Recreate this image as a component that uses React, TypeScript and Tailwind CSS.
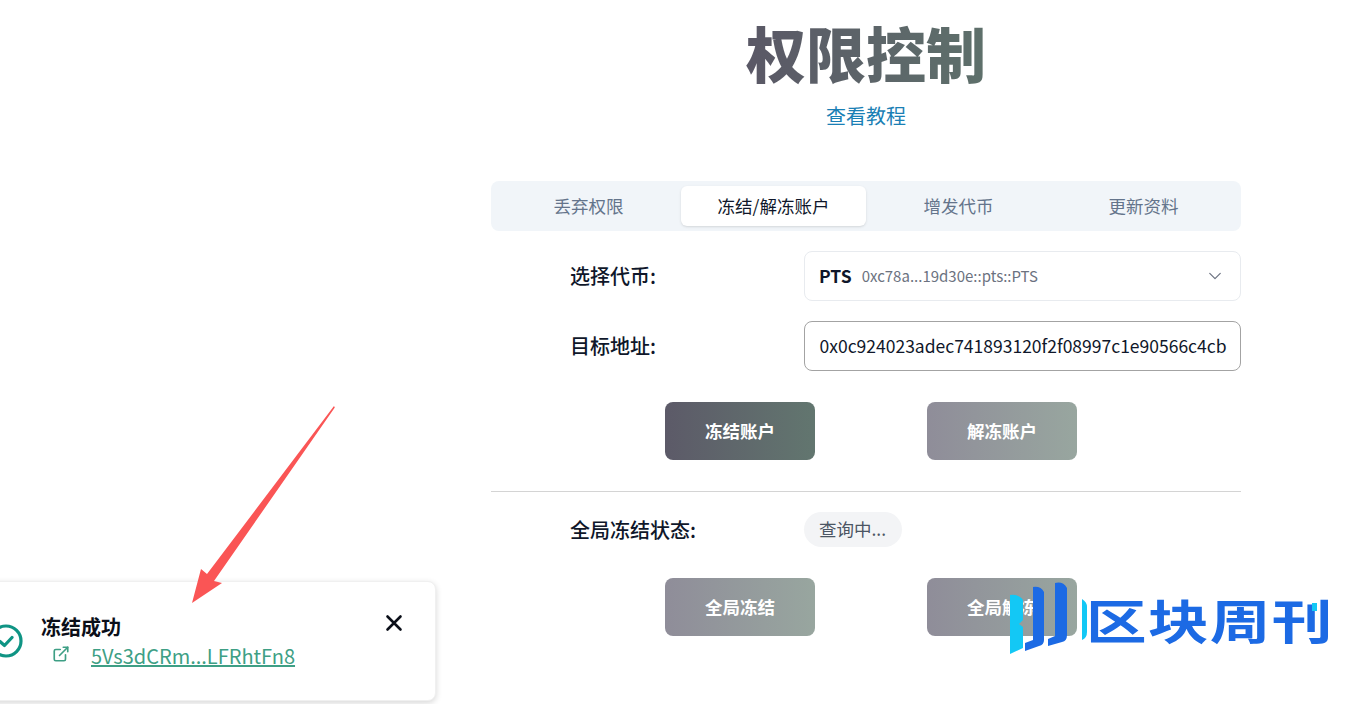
export default function App() {
  const cjk = "font-['Noto_Sans_CJK_SC','Noto_Sans',sans-serif]";
  return (
    <div className={`relative h-[704px] w-[1361px] overflow-hidden bg-white text-[#0f172a] ${cjk}`}>
      <div className="flex">
        <div className="w-[371px] shrink-0" />
        <main className="w-[990px] flex flex-col items-center">
          <h1 className="mt-[9px] h-[86px] text-[60px] leading-[86px] font-black bg-gradient-to-r from-[#5a5866] to-[#5e706b] bg-clip-text text-transparent">
            权限控制
          </h1>
          <a className="mt-[8px] h-[26px] text-[20px] leading-[26px] text-[#1a7fb5]">查看教程</a>
          <div className="mt-[52px] w-[750px]">
            <div className="grid h-[50px] grid-cols-4 rounded-[8px] bg-[#f1f5f9] p-[5px] text-[17.5px] text-[#64748b]">
              <div className="flex items-center justify-center">丢弃权限</div>
              <div className="flex items-center justify-center rounded-[6px] bg-white text-[#0f172a] shadow-sm">冻结/解冻账户</div>
              <div className="flex items-center justify-center">增发代币</div>
              <div className="flex items-center justify-center">更新资料</div>
            </div>

            <div className="mt-[20px] flex h-[50px] items-center pl-[79px]">
              <label className="w-[234px] text-[20px] font-medium">选择代币:</label>
              <div className="flex h-[50px] w-[437px] items-center rounded-[8px] border border-[#e8ebef] pl-[14px] pr-[16px]">
                <span className="text-[17.5px] font-bold">PTS</span>
                <span className="ml-[10px] text-[15px] text-[#6b7280]">0xc78a...19d30e::pts::PTS</span>
                <svg className="ml-auto h-[18px] w-[18px] text-[#6b7280]" viewBox="0 0 24 24" fill="none" stroke="currentColor" strokeWidth="1.6" strokeLinecap="round" strokeLinejoin="round">
                  <path d="m5 8.5 7 7 7-7" />
                </svg>
              </div>
            </div>

            <div className="mt-[20px] flex h-[50px] items-center pl-[79px]">
              <label className="w-[234px] text-[20px] font-medium">目标地址:</label>
              <div className="flex h-[50px] w-[437px] items-center overflow-hidden whitespace-nowrap rounded-[8px] border border-[#a3a3a3] pl-[14.5px] text-[17.5px]">
                0x0c924023adec741893120f2f08997c1e90566c4cb
              </div>
            </div>

            <div className="mt-[31px] flex gap-[112px] pl-[174px]">
              <button className="h-[58px] w-[150px] rounded-[8px] bg-gradient-to-r from-[#5c5a68] to-[#62766f] text-[17.5px] font-bold text-white">冻结账户</button>
              <button className="h-[58px] w-[150px] rounded-[8px] bg-gradient-to-r from-[#8f8d99] to-[#98a69f] text-[17.5px] font-bold text-white">解冻账户</button>
            </div>

            <hr className="mt-[31px] border-[#d4d4d4]" />

            <div className="mt-[20px] flex h-[35px] items-center pl-[79px]">
              <label className="w-[234px] text-[20px] font-medium">全局冻结状态:</label>
              <span className="flex h-[35px] items-center rounded-full bg-[#f3f4f6] pl-[15px] pr-[16px] text-[17.5px] text-[#4b5563]">查询中...</span>
            </div>

            <div className="mt-[31px] flex gap-[112px] pl-[174px]">
              <button className="h-[58px] w-[150px] rounded-[8px] bg-gradient-to-r from-[#8f8d99] to-[#98a69f] text-[17.5px] font-bold text-white">全局冻结</button>
              <button className="h-[58px] w-[150px] rounded-[8px] bg-gradient-to-r from-[#8f8d99] to-[#98a69f] text-[17.5px] font-bold text-white">全局解冻</button>
            </div>
          </div>
        </main>
      </div>

      {/* toast */}
      <div className="absolute left-[-30px] top-[581px] h-[120px] w-[466px] rounded-[8px] border border-[#f0f0f0] bg-white shadow-[0_2px_6px_rgba(0,0,0,0.16)]">
        <svg className="absolute left-[18px] top-[42px] h-[34px] w-[34px] text-[#0f9484]" viewBox="0 0 34 34" fill="none" stroke="currentColor" strokeWidth="3.2" strokeLinecap="round" strokeLinejoin="round">
          <circle cx="17" cy="17" r="15" />
          <path d="m11 17.5 4.5 4 7.5-8" />
        </svg>
        <div className="absolute left-[70px] top-[31px] text-[20px] leading-[28px] font-bold text-[#0b0f19]">冻结成功</div>
        <svg className="absolute left-[81px] top-[63px] h-[18px] w-[18px] text-[#3e9f85]" viewBox="0 0 24 24" fill="none" stroke="currentColor" strokeWidth="2.2" strokeLinecap="round" strokeLinejoin="round">
          <path d="M15 3h6v6" />
          <path d="M10 14 21 3" />
          <path d="M18 13v6a2 2 0 0 1-2 2H5a2 2 0 0 1-2-2V8a2 2 0 0 1 2-2h6" />
        </svg>
        <a className="absolute left-[120px] top-[60px] text-[20px] leading-[28px] text-[#3e9f85] underline">5Vs3dCRm...LFRhtFn8</a>
        <svg className="absolute left-[413px] top-[31px] h-[20px] w-[20px] text-[#0b0f19]" viewBox="0 0 20 20" fill="none" stroke="currentColor" strokeWidth="2.6" strokeLinecap="round">
          <path d="m3.5 3.5 13 13M16.5 3.5l-13 13" />
        </svg>
      </div>

      {/* annotation arrow */}
      <svg className="absolute left-[180px] top-[400px] h-[210px] w-[170px]" viewBox="0 0 170 210">
        <polygon points="154,6 154.8,7.5 34,181 42,183 12,203 21,169 27,174" fill="#fa5555" />
      </svg>

      {/* watermark logo */}
      <svg className="absolute left-[1005px] top-[580px] h-[80px] w-[90px]" viewBox="0 0 90 80">
        <path d="M5 15 Q14 14 18 20 V40 L14 44 L18 47 V68 L5 74 Z" fill="#13c8f5" />
        <path d="M28 7 Q36 6 39 12 V60 Q39 65 34 66 L20 71 V63 L28 60 Z" fill="#1c6ae4" />
        <path d="M50 3 Q58 1 62 8 V55 Q62 61 57 62 L43 66 V59 L50 56 Z" fill="#1c6ae4" />
        <path d="M77 19 Q82 22 82 27 V52 Q82 58 77 60 Z" fill="#13c8f5" />
      </svg>
      <div className="absolute left-[1086px] top-[587px] origin-left scale-x-[1.29] whitespace-nowrap text-[47px] leading-[64px] font-semibold tracking-[1px] text-[#1c6ae4]">区块周刊</div>
      <div className="absolute left-[1312px] top-[603px] h-[8px] w-[5px] bg-[#13c8f5]" />
    </div>
  );
}
